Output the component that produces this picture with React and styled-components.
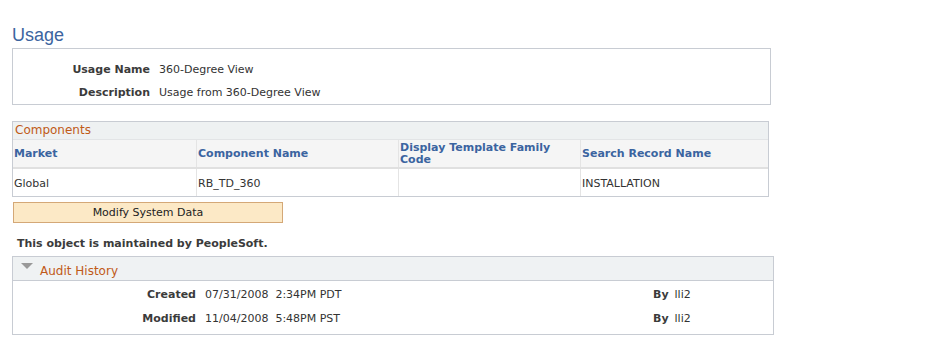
import React from 'react'
import styled, { createGlobalStyle } from 'styled-components';

const GlobalStyle = createGlobalStyle`
    body {
        margin: 0;
        background: #fff;
        font-family: "DejaVu Sans", Verdana, sans-serif;
        font-size: 11px;
        color: #333;
    }
`;

const components = [
    { market: 'Global', component: 'RB_TD_360', template: '', search: 'INSTALLATION' },
];

const audit = [
    { label: 'Created', when: '07/31/2008  2:34PM PDT', by: 'lli2' },
    { label: 'Modified', when: '11/04/2008  5:48PM PST', by: 'lli2' },
];

function App() {
    return (
        <Page>
            <GlobalStyle />
            <Title>Usage</Title>

            <InfoBox>
                <FieldRow>
                    <Label width={137}>Usage Name</Label>
                    <Value>360-Degree View</Value>
                </FieldRow>
                <FieldRow>
                    <Label width={137}>Description</Label>
                    <Value>Usage from 360-Degree View</Value>
                </FieldRow>
            </InfoBox>

            <Grid>
                <GridTitle>Components</GridTitle>
                <Table>
                    <thead>
                        <tr>
                            <Th style={{ width: 181 }}>Market</Th>
                            <Th style={{ width: 199 }}>Component Name</Th>
                            <Th style={{ width: 179 }}>Display Template Family Code</Th>
                            <Th>Search Record Name</Th>
                        </tr>
                    </thead>
                    <tbody>
                        {components.map((c, i) => (
                            <tr key={i}>
                                <Td>{c.market}</Td>
                                <Td>{c.component}</Td>
                                <Td>{c.template}</Td>
                                <Td>{c.search}</Td>
                            </tr>
                        ))}
                    </tbody>
                </Table>
            </Grid>

            <ModifyButton>Modify System Data</ModifyButton>

            <Notice>This object is maintained by PeopleSoft.</Notice>

            <AuditBox>
                <AuditHeader>
                    <Triangle />
                    <AuditTitle>Audit History</AuditTitle>
                </AuditHeader>
                <AuditBody>
                    {audit.map((a) => (
                        <AuditRow key={a.label}>
                            <Label width={183}>{a.label}</Label>
                            <When>{a.when}</When>
                            <ByLabel>By</ByLabel>
                            <Value>{a.by}</Value>
                        </AuditRow>
                    ))}
                </AuditBody>
            </AuditBox>
        </Page>
    )
}
export default App

const Page = styled.div`
    padding: 25px 0 0 12px;
    width: 762px;
`;

const Title = styled.h1`
    margin: 0 0 3px 0;
    font-family: "Liberation Sans", Arial, sans-serif;
    font-weight: normal;
    font-size: 18px;
    line-height: 20px;
    color: #3c64a0;
`;

const InfoBox = styled.div`
    width: 757px;
    border: 1px solid #c8ccd3;
    padding: 9px 0 0 0;
`;

const FieldRow = styled.div`
    display: flex;
    align-items: baseline;
    height: 23px;
    line-height: 23px;
`;

const Label = styled.span`
    width: ${p => p.width}px;
    flex: none;
    text-align: right;
    font-weight: bold;
    color: #3b3b3b;
    padding-right: 9px;
`;

const Value = styled.span`
    color: #333;
`;

const Grid = styled.div`
    margin-top: 16px;
    width: 755px;
    border: 1px solid #c8ccd3;
`;

const GridTitle = styled.div`
    height: 17px;
    line-height: 17px;
    padding-left: 2px;
    background: #eef1f2;
    border-bottom: 1px solid #e2e4e6;
    font-size: 12px;
    color: #c05a18;
`;

const Table = styled.table`
    width: 100%;
    border-collapse: collapse;
    table-layout: fixed;
`;

const Th = styled.th`
    height: 26px;
    padding: 1px 1px 0 1px;
    text-align: left;
    vertical-align: middle;
    background: #f5f5f5;
    border-right: 1px solid #e4e4e4;
    border-bottom: 2px solid #e0e0e0;
    font-weight: bold;
    font-size: 11px;
    line-height: 12px;
    color: #3b64a0;
    &:last-child { border-right: none; }
`;

const Td = styled.td`
    height: 26px;
    padding: 1px 1px 0 1px;
    vertical-align: middle;
    border-right: 1px solid #e4e4e4;
    color: #333;
    &:last-child { border-right: none; }
`;

const ModifyButton = styled.button`
    display: block;
    margin-top: 5px;
    margin-left: 1px;
    width: 270px;
    height: 21px;
    padding: 0;
    background: #fce9c6;
    border: 1px solid #d4a877;
    border-radius: 0;
    font-family: "DejaVu Sans", Verdana, sans-serif;
    font-size: 11px;
    color: #222;
`;

const Notice = styled.div`
    margin-top: 14px;
    padding-left: 5px;
    font-weight: bold;
    color: #3b3b3b;
`;

const AuditBox = styled.div`
    margin-top: 6px;
    width: 760px;
    border: 1px solid #c8ccd3;
`;

const AuditHeader = styled.div`
    display: flex;
    align-items: center;
    height: 23px;
    background: #eff2f3;
    border-bottom: 1px solid #c8ccd3;
    padding-left: 8px;
`;

const Triangle = styled.span`
    width: 0;
    height: 0;
    border-left: 6px solid transparent;
    border-right: 6px solid transparent;
    border-top: 6px solid #999;
    margin-right: 7px;
    margin-top: -6px;
`;

const AuditTitle = styled.span`
    font-size: 12px;
    color: #c05a18;
    padding-top: 4px;
`;

const AuditBody = styled.div`
    padding: 2px 0 3px 0;
`;

const AuditRow = styled.div`
    display: flex;
    align-items: baseline;
    height: 24px;
    line-height: 24px;
`;

const When = styled.span`
    width: 448px;
    white-space: pre;
    color: #333;
`;

const ByLabel = styled.span`
    font-weight: bold;
    color: #3b3b3b;
    margin-right: 6px;
`;
